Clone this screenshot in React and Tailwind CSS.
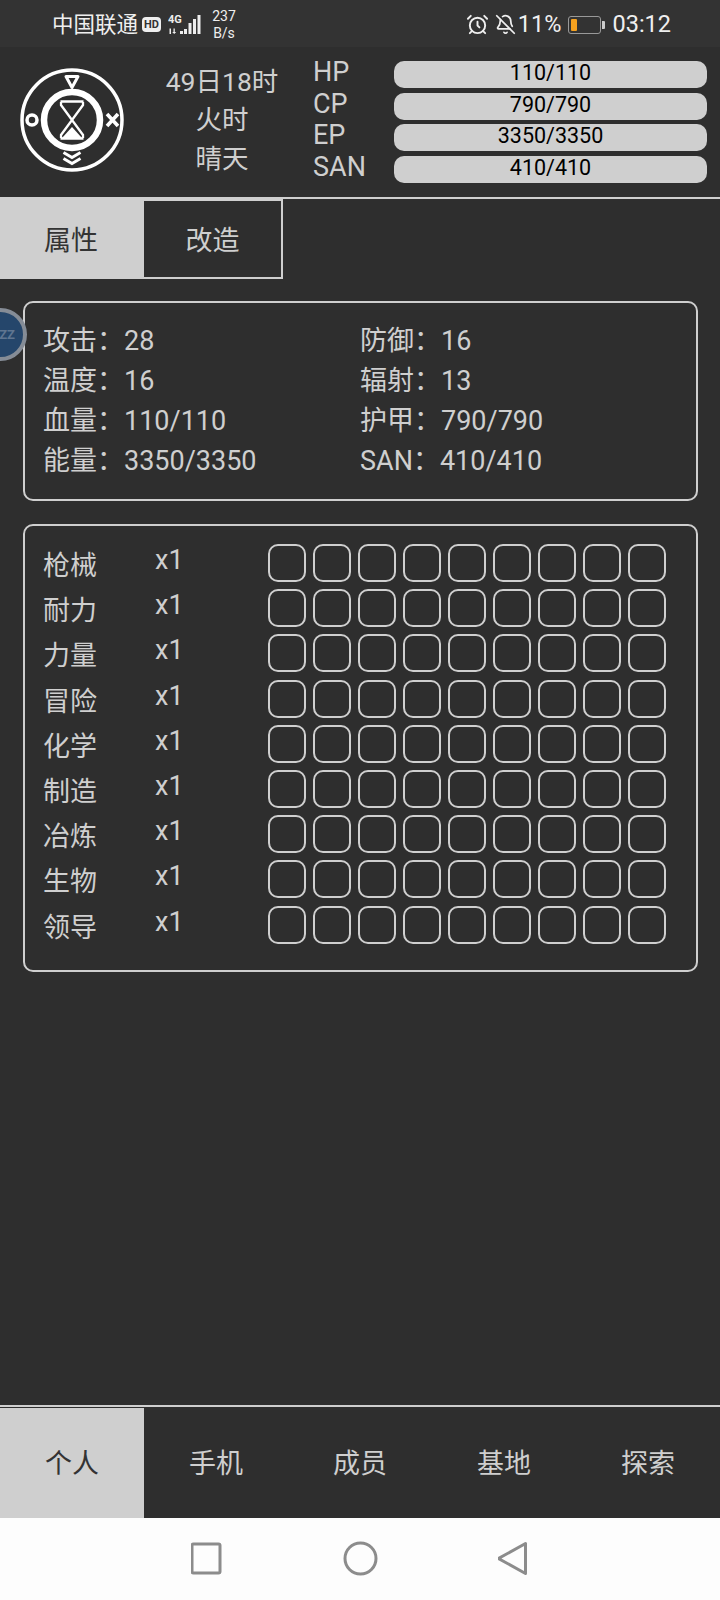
import React from 'react';
import { AlarmClock, BellOff } from 'lucide-react';

const bars = [
  { name: 'HP', value: '110/110' },
  { name: 'CP', value: '790/790' },
  { name: 'EP', value: '3350/3350' },
  { name: 'SAN', value: '410/410' },
];

const stats = [
  ['攻击：', '28', '防御：', '16'],
  ['温度：', '16', '辐射：', '13'],
  ['血量：', '110/110', '护甲：', '790/790'],
  ['能量：', '3350/3350', 'SAN：', '410/410'],
];

const skills = ['枪械', '耐力', '力量', '冒险', '化学', '制造', '冶炼', '生物', '领导'];
const slots = [0, 1, 2, 3, 4, 5, 6, 7, 8];
const navs = ['个人', '手机', '成员', '基地', '探索'];

const Logo = () => (
  <svg width="108" height="108" viewBox="0 0 108 108" fill="none" stroke="#fff">
    <circle cx="54" cy="54" r="50" strokeWidth="3.500" />
    <circle cx="54" cy="54" r="28" strokeWidth="6.500" />
    <path d="M48 10.500h12l-6 11z" strokeWidth="3" strokeLinejoin="round" />
    <circle cx="14" cy="54" r="5" strokeWidth="3.500" />
    <path d="M89 48l11 12M100 48l-11 12" strokeWidth="3.600" />
    <path d="M45.500 86.500l8.500 5 8.500-5M45.500 92.500l8.500 5 8.500-5" strokeWidth="3" />
    <path d="M42.500 35.500h23M42.500 72.500h23M43 36v3l11 15 11-15v-3M43 72v-3l11-15 11 15v3" strokeWidth="2.300" />
    <path d="M44 72l10-11 10 11z" fill="#fff" stroke="none" />
  </svg>
);

const Signal = () => (
  <svg width="33" height="24" viewBox="0 0 33 24" fill="#eee">
    <rect x="12" y="18" width="3" height="3" />
    <rect x="16" y="16" width="3" height="5" />
    <rect x="20.500" y="10" width="3" height="11" />
    <rect x="25" y="6" width="3" height="15" />
    <rect x="29.500" y="2" width="3" height="19" />
    <text x="0" y="10" fontSize="11" fontWeight="700" fontFamily="Roboto, sans-serif">4G</text>
    <path d="M1.500 15.500h1.500v5.500h-1.500zM5.500 15.500h1.300v3.500h1.400l-2 2-2-2h1.300z" />
  </svg>
);

export default function App() {
  return (
    <div className="h-[1600px] w-[720px] flex flex-col bg-[#2e2e2e] text-[#cfcfcf] font-['Roboto','Noto_Sans_CJK_SC',sans-serif] overflow-hidden relative">
      {/* status bar */}
      <div className="h-[47px] bg-[#333333] flex items-center pt-[2px] pl-[52px] pr-[49px] text-[#efefef]">
        <span className="text-[21.500px] leading-none w-[88px] whitespace-nowrap">中国联通</span>
        <span className="ml-[2px] w-[19px] h-[15px] bg-[#efefef] rounded-[4px] text-[#333333] text-[11px] font-bold leading-[15px] text-center">HD</span>
        <span className="ml-[7px]"><Signal /></span>
        <span className="ml-[11px] w-[24px] text-[14px] leading-[17px] text-center">237<br />B/s</span>
        <div className="ml-auto flex items-center">
          <AlarmClock size={23} strokeWidth={2} className="mr-[-1px]" />
          <BellOff size={21} strokeWidth={2} className="ml-[7px]" />
          <span className="ml-[2px] text-[23.500px] leading-none">11%</span>
          <div className="ml-[7px] w-[33px] h-[18px] border border-[#999] rounded-[3px] flex items-center px-[2px]">
            <div className="w-[6px] h-[12px] bg-[#f5a11f] rounded-[1px]"></div>
          </div>
          <div className="ml-[1px] w-[3px] h-[8px] bg-[#ccc] rounded-r-[1px]"></div>
          <span className="ml-[7px] text-[23.500px] leading-none">03:12</span>
        </div>
      </div>

      {/* header */}
      <div className="h-[150px] flex items-center">
        <div className="ml-[18px] mb-[5px] w-[108px] shrink-0"><Logo /></div>
        <div className="ml-[32px] mb-[3px] w-[128px] shrink-0 text-center text-[26.500px] leading-[38.500px]">
          <div>49日18时</div>
          <div>火时</div>
          <div>晴天</div>
        </div>
        <div className="ml-[27px] flex-1 flex flex-col gap-[4px] pr-[13px]">
          {bars.map((bar) => (
            <div key={bar.name} className="flex items-center h-[27.500px]">
              <span className="w-[81px] mb-[4px] text-[27px] leading-none">{bar.name}</span>
              <div className="flex-1 h-[27px] bg-[#cfcfcf] rounded-[10px] text-black text-[21.500px] leading-[23px] text-center">{bar.value}</div>
            </div>
          ))}
        </div>
      </div>

      {/* sub tabs */}
      <div className="border-t-2 border-[#cfcfcf] h-[80px] flex items-start">
        <div className="w-[142px] h-[80px] pt-[4px] bg-[#cfcfcf] text-[#333] text-[27px] flex items-center justify-center">属性</div>
        <div className="w-[141px] h-[80px] pt-[4px] border-2 border-[#cfcfcf] text-[27px] flex items-center justify-center">改造</div>
      </div>

      {/* stats */}
      <div className="mt-[24px] ml-[23px] mr-[22px] h-[200px] border-2 border-[#cfcfcf] rounded-[10px] pl-[18px] pt-[18px] text-[27px] leading-[40px]">
        {stats.map((row) => (
          <div key={row[0]} className="flex">
            <span className="w-[317px] shrink-0">{row[0]}{row[1]}</span>
            <span>{row[2]}{row[3]}</span>
          </div>
        ))}
      </div>

      {/* skills */}
      <div className="mt-[23px] ml-[23px] mr-[22px] h-[448px] border-2 border-[#cfcfcf] rounded-[10px] pl-[18px] pt-[18px]">
        {skills.map((skill) => (
          <div key={skill} className="h-[45.200px] flex">
            <span className="w-[112px] text-[27px] leading-[40px] mt-[2px]">{skill}</span>
            <span className="w-[113px] text-[27px] leading-[40px] -mt-[4px]">x1</span>
            <div className="flex gap-[7px]">
              {slots.map((slot) => (
                <div key={slot} className="w-[38px] h-[38px] border-2 border-[#cfcfcf] rounded-[10px]"></div>
              ))}
            </div>
          </div>
        ))}
      </div>

      <div className="flex-1"></div>

      {/* bottom nav */}
      <div className="border-t-2 border-[#cfcfcf] pt-[1px]">
        <div className="h-[110px] flex">
          {navs.map((nav, i) => (
            <div key={nav} className={i === 0 ? 'w-[144px] pt-[3px] bg-[#cfcfcf] text-[#333] text-[27px] flex items-center justify-center' : 'w-[144px] pt-[3px] text-[27px] flex items-center justify-center'}>{nav}</div>
          ))}
        </div>
      </div>

      {/* android nav */}
      <div className="h-[82px] bg-[#fdfdfd] flex items-center justify-center gap-[120px] pb-[1px]">
        <svg width="32" height="33" viewBox="0 0 32 33" fill="none" stroke="#8c8c8c" strokeWidth="3"><rect x="1" y="2" width="28" height="29" rx="1.500" /></svg>
        <svg width="35" height="35" viewBox="0 0 35 35" fill="none" stroke="#8c8c8c" strokeWidth="3"><circle cx="17.500" cy="17.500" r="15.500" /></svg>
        <svg width="32" height="35" viewBox="0 0 32 35" fill="none" stroke="#8c8c8c" strokeWidth="3" strokeLinejoin="round"><path d="M27.500 2.500v30L0.500 17.500z" /></svg>
      </div>

      {/* floating ball */}
      <div className="absolute left-[-26px] top-[308px] w-[53px] h-[53px] rounded-full border-[4px] border-[#858c96] bg-[#25466b] flex items-center justify-end pr-[8px] text-[13px] font-bold text-[#5f7590]">ZZ</div>
    </div>
  );
}
